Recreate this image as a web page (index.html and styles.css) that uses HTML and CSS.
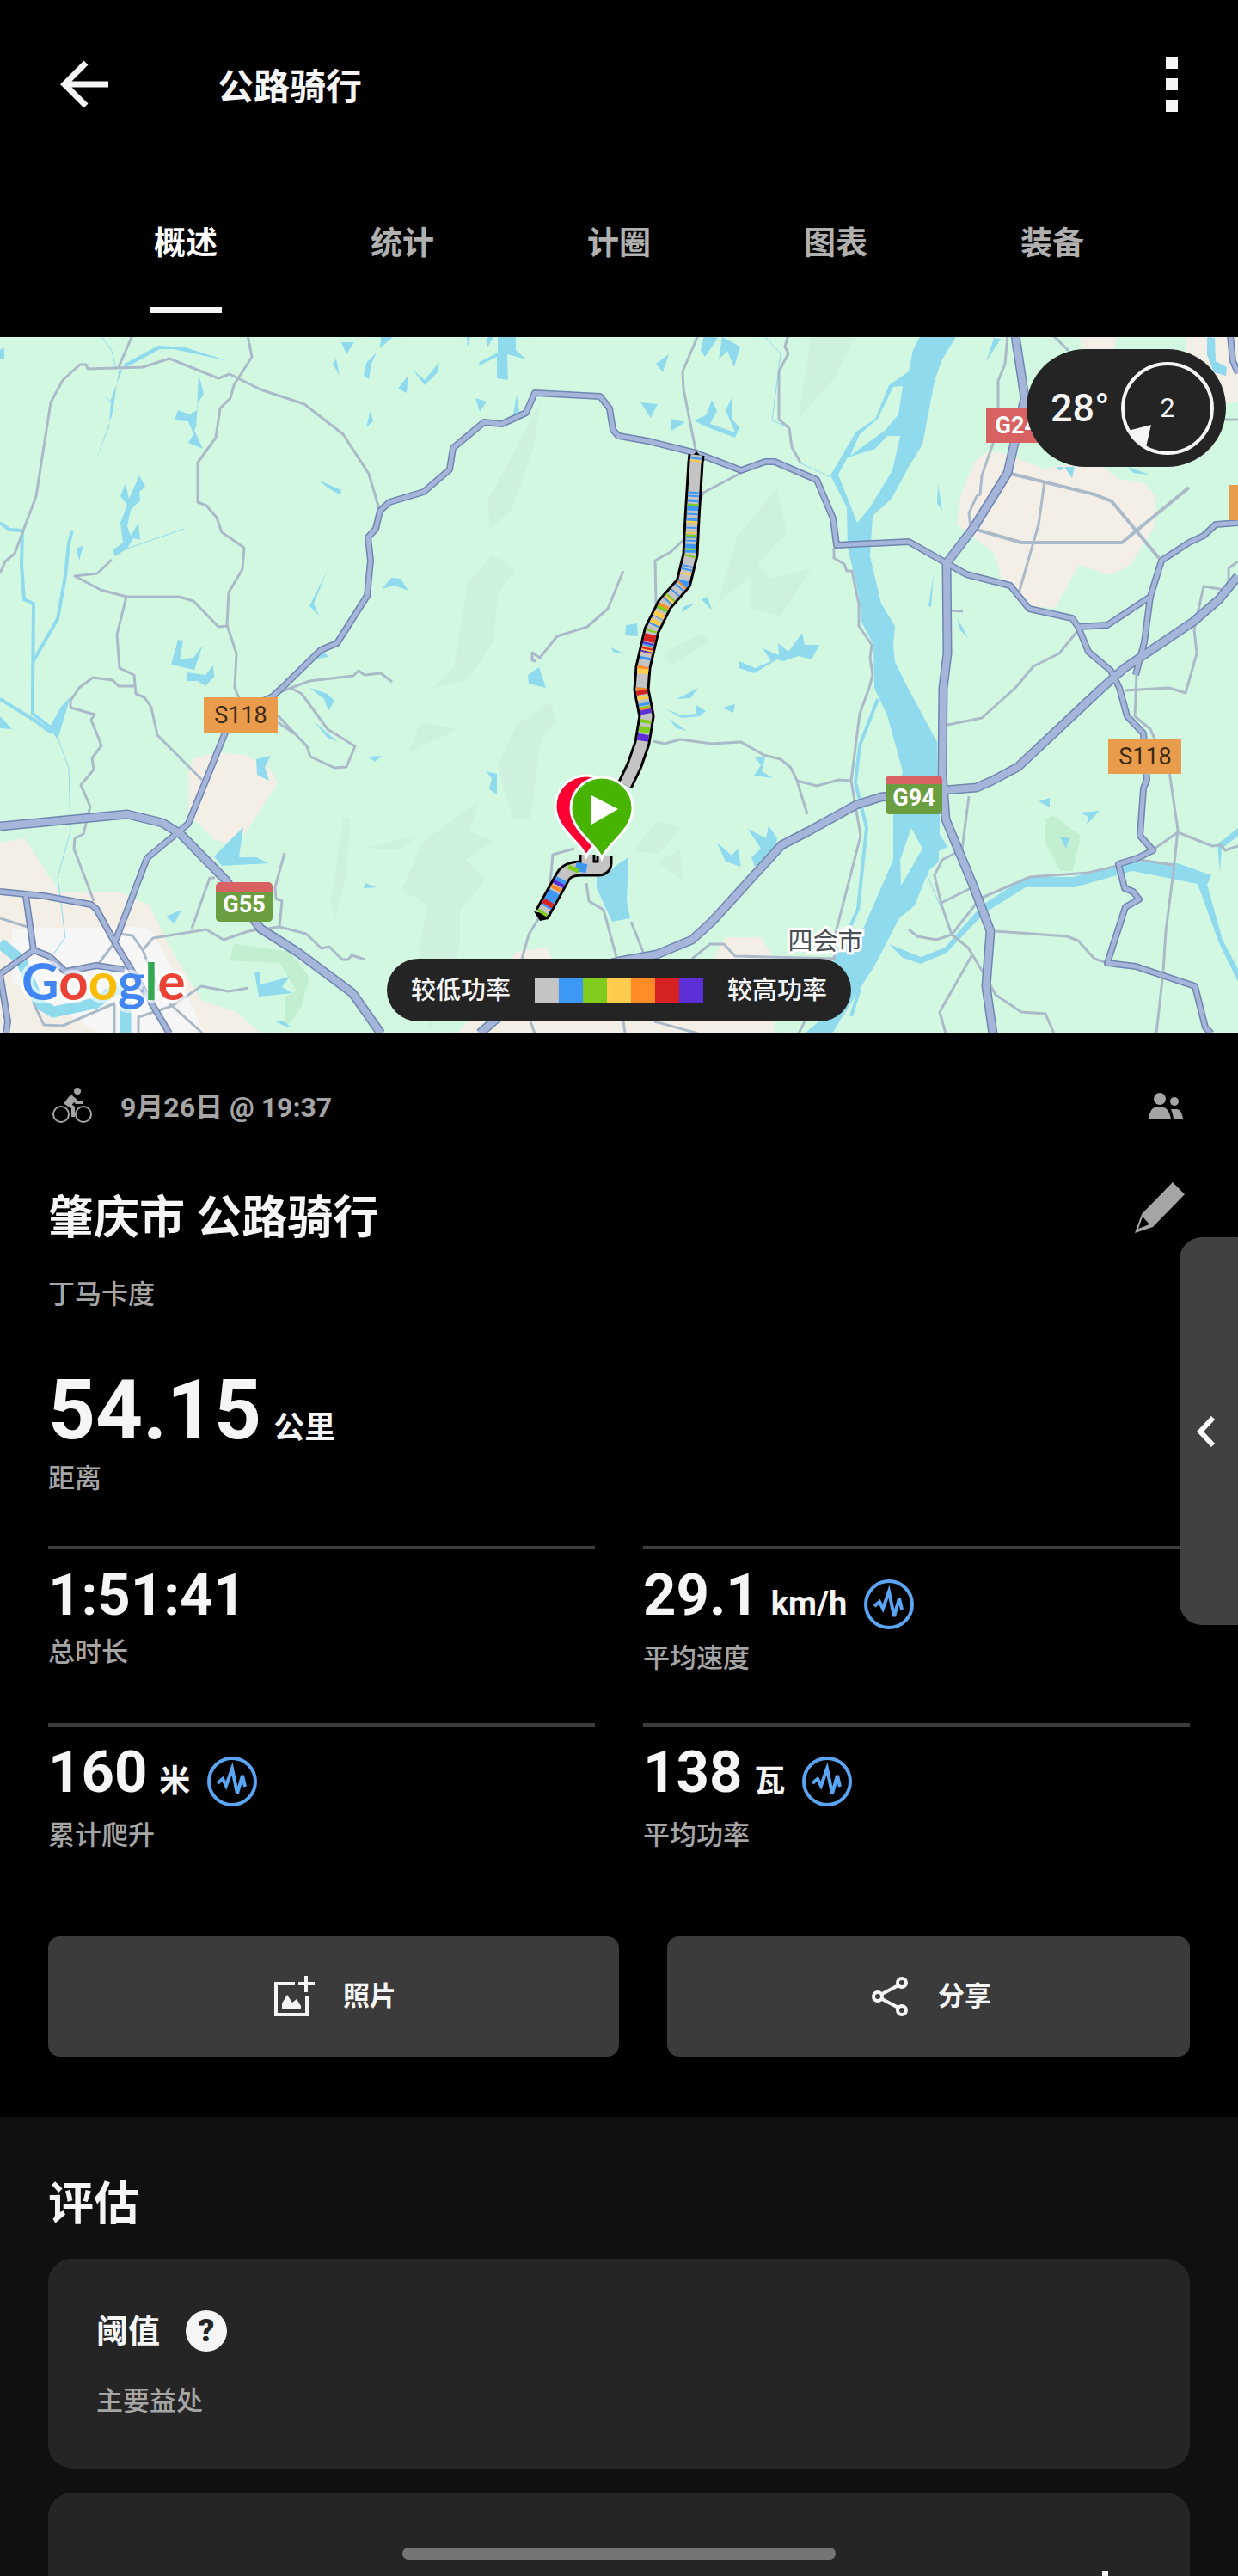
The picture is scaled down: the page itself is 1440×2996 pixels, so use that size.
FILE: index.html
```html
<!DOCTYPE html>
<html lang="zh-CN">
<head>
    <meta charset="UTF-8">
    <meta name="viewport" content="width=device-width, initial-scale=1.0">
    <title>公路骑行</title>
    <link rel="stylesheet" href="styles.css">
</head>
<body>
    <header class="app-bar">
        <button class="icon-button" aria-label="返回">
            <svg width="56" height="56" viewBox="0 0 56 56" fill="none" stroke="currentColor" stroke-width="7"><path d="M56 28H6M30 3L5 28l25 25"/></svg>
        </button>
        <h1 class="app-title">公路骑行</h1>
        <button class="icon-button" aria-label="更多">
            <svg width="14" height="64" viewBox="0 0 14 64" fill="currentColor"><path d="M0 0h14v14H0zM0 25h14v14H0zM0 50h14v14H0z"/></svg>
        </button>
    </header>

    <nav class="tabs">
        <button class="tab active">概述</button>
        <button class="tab">统计</button>
        <button class="tab">计圈</button>
        <button class="tab">图表</button>
        <button class="tab">装备</button>
    </nav>

    <section class="map">
        <svg class="map-canvas" viewBox="0 0 1440 810">
            <defs>
                <g id="highways">
                    <path d="M1181-2L1192 71 1172 158 1133 221 1101 263 1102 368 1097 408 1096 508 1100 561 1132 638 1152 691 1147 755 1155 810"/>
                    <path d="M1440 278L1418 305 1388 331 1308 385 1282 408 1184 500 1154 516 1136 524 1099 527 1025 535 996 544 940 575 909 591 828 680 805 701 764 718 720 726 640 745 574 796 558 810"/>
                    <path d="M0 569L148 555 189 565 210 578 262 631 303 688 347 716 410 763 443 810"/>
                </g>
                <g id="trunks">
                    <path d="M720 116L713 108 709 83 698 69 622 65 612 88 584 101 563 99 527 129 523 154 493 180 453 192 442 202 437 223 428 233 431 260 427 301 392 356 373 364 328 408 317 418 270 440 262 460 219 566 171 606 134 703"/>
                    <path d="M720 115L754 121 810 135 862 155 890 145 901 145 950 166 969 211 973 242 1057 238 1101 263 1124 276 1175 289 1197 316 1247 327 1254 337 1288 335 1338 302 1351 260 1383 239 1400 231 1414 218 1440 216"/>
                    <path d="M1338 302L1331 355 1321 393"/>
                    <path d="M1254 337L1266 366 1292 388 1302 408 1311 441 1330 461 1334 515 1330 525 1326 580 1341 597 1323 606 1301 613 1308 641 1318 645 1325 654 1309 663 1288 728 1321 732 1390 755 1402 803 1409 810"/>
                    <path d="M0 645L51 650 106 660 112 665 134 705 174 771 197 810"/>
                    <path d="M30 650L39 713 0 741 9 796 7 810"/>
                    <path d="M39 713L57 720 76 738 112 731 145 736"/>
                    <path d="M1431-2L1434 28 1440 42"/>
                </g>
                <path id="ride" d="M810 137L809 146 805 211 803 253 795 286 773 311 758 341 748 384 746 410 752 441 747 472 738 498 727 521"/>
                <path id="ride-end" d="M683 602V616M703 603V611Q703 618 696 618H677Q660 618 655 627L631 670"/>
            </defs>

            <rect class="land" width="1440" height="810"/>

            <g class="hill">
                <path d="M629 75L567 191 570 223 595 201 620 131zM573 253L599 271 579 300 574 355 544 398 505 408 528 383 544 286z"/>
                <path d="M943-2H995L970 48 929 95zM904 176L915 228 881 265 897 281 944 269 908 325 872 316 874 278 834 310 858 231z"/>
                <path d="M771 368L814 345 826 353 780 383zM736 598L764 563 793 570 766 601zM791 595L795 633 765 611z"/>
                <path d="M640 425L648 446 629 468 617 561H597L578 498 601 451zM558 538L546 575 574 586 542 608 565 630 535 668V708L500 805 487 708 498 661 467 643 491 588z"/>
                <path d="M489 448L533 456 475 483zM399 561H408L402 628 389 680 385 655zM425 594L489 579 463 597z"/>
            </g>
            <path class="park" d="M273 706L337 715 360 745 350 780 331 805V768L345 760 325 728 266 725zM1225 556L1257 580 1248 621H1233L1216 588V561z"/>

            <g class="suburb">
                <path d="M1149 133L1168 135 1214 153 1262 145 1278 148 1301 165 1331 170 1344 185V218L1315 265 1292 277 1255 265 1227 315 1200 313 1175 285 1165 281 1156 251 1113 218 1117 185 1133 145z"/>
                <path d="M1255-2H1299L1290 40 1260 20zM1380-2H1440V75L1410 80 1380 30z"/>
                <path d="M225 490L253 483 285 486 312 500 323 518 287 575 262 588 250 585 220 555 219 508z"/>
                <path d="M0 588L28 583 69 645H138L174 661 197 708 234 771 275 785 303 810H0z"/>
                <path d="M533 810L600 715 636 710 650 740 820 740 844 698H885L910 740 899 810z"/>
            </g>
            <path class="city" d="M14 688L151 686 174 688 197 728 220 771 238 810H115L60 775 14 750z"/>

            <g class="water">
                <path d="M1071-2L1062 15 1057 40 1034 56 1018 95 995 111 966 161 985 198 986 245 999 301 1002 331 1016 358 1017 408 1032 440 1050 505 1039 555V608L1005 686 972 718 963 741 977 775 936 810H968L1000 758 1018 730 1046 676 1064 661 1080 621 1092 610V598L1102 593 1093 578V555L1090 511V471L1056 408 1041 378 1039 358 1041 336 1025 310 1012 255 1015 208 1037 188 1057 151 1073 125 1087 51 1096 26 1113-2z"/>
                <path d="M709 621L720 612 731 605 729 655 733 676 712 680 694 641V626z"/>
                <path d="M1034 706L1071 721 1099 710 1142 661 1193 628 1248 628 1317 610 1370 612 1409 626 1404 637 1422 701 1440 735V750L1418 705 1393 636 1317 621 1250 640 1193 640 1145 670 1101 716 1071 729 1050 722z"/>
                <path d="M397 6H412L403 20zM391 25L395 45 387 31zM443 0H457L442 13zM438 18L432 31 429 49 423 45 426 30zM475 44L473 65 463 60zM480 38L494 50 511 29 509 41 494 56z"/>
                <path d="M579-2H600V15L612 26 590 20 591 50 578 48V23L556 34 558 29 579 18zM553 71L566 75 558 87zM601 67L604 88 597 90zM431 85L434 98 426 105zM543 0L547 0 544 12zM567 0H574L567 12z"/>
                <path d="M231 43L237 66 230 77 228 105 226 108 236 130 219 123 225 113 219 98 203 97 207 85 221 90 229 85z"/>
                <path d="M146 170L150 188 162 161 169 174 162 180 163 190 152 201 148 220 152 231 161 216 163 236 155 234 148 246 134 255 131 248 143 239 140 216 148 195 140 185z"/>
                <path d="M370 166L397 178 396 184 381 175zM381 271L365 310 371 324 360 313zM444 293L455 280 466 281 475 295 459 289zM97 242L92 260 89 246zM0 15L5 12V25H0z"/>
                <path d="M207 352L213 353 209 375 225 373 236 358 226 387 199 381zM218 390L239 393 248 382 249 395 239 406 230 400H218zM627 384L635 408 615 403 614 393zM373 364L383 372 368 374z"/>
                <path d="M145 31L184 10 215 12 266 28 202 14 186 14 138 40 133 75 130 92 109 150 127 104 129 75 119 66 128 75z"/>
                <path d="M819-2L835 1 820 23 815 15zM840 0L861 11 854 35 846 16 836 26zM778 20L771 41 763 31zM745 76L765 78 757 94zM781 95L797 99 781 109zM828 73L834 86 826 101 855 111 844 85 851 71V95L860 105 855 117 823 105 807 97 821 91z"/>
                <path d="M1156 1L1164 2 1147 29zM1404 0L1413 1 1414 28 1427 35 1426 45 1412 41 1404 21zM1229 151H1250L1247 164 1238 151 1233 156zM1312 151L1337 160 1318 158zM1091 171L1096 202 1090 193zM1086 274L1083 314 1080 313zM1113 326L1126 350 1117 341z"/>
                <path d="M860 377L878 385 897 377 887 362 906 370 905 356 917 366 933 344 936 358 953 358 944 375 929 371 911 377 904 375 877 391 860 385zM728 335L741 333 742 348 727 347zM792 321L796 313 808 310zM816 305L823 302 828 318zM711 361L728 369 713 366z"/>
                <path d="M812 408L787 421 803 420zM773 432L793 440 810 438V428L821 435 814 441 793 443zM840 431L855 427 853 437zM778 444L799 458 787 455zM878 489H890L886 505 899 513 877 510 885 498z"/>
                <path d="M870 572L891 583 894 568 904 583 901 595 878 616 874 605 885 595zM834 588L851 603 858 595 862 616 844 610zM1208 540L1221 536V547zM1256 553L1279 551 1264 567 1266 558zM1233 581L1244 583 1240 595zM1440 571L1416 590 1419 623 1421 595 1440 580z"/>
                <path d="M298 491L315 487 308 500 313 516 299 509zM283 570L278 605H298L313 612 258 615 249 604zM360 408L381 415 389 423 382 435 377 421zM365 447L393 471 381 466zM428 488L444 487 436 494zM565 505L578 508V532L569 526 572 513z"/>
                <path d="M425 635L438 640 423 641zM193 674L211 666 203 682zM296 738L303 739V753L337 744 328 756 340 763 301 767zM57 455L71 430 82 418 67 468zM319 795L330 796 340 804 328 800zM0 441L14 456 0 455z"/>
            </g>
            <path class="land" d="M1039 58L1050 57 1045 90 1030 108 989 138 1000 113 1021 95zM1032 115H1047L1038 155 1012 198 997 216 975 160 986 140 1018 130zM1060 571L1073 595 1048 638 1047 608z"/>

            <g class="stream">
                <path d="M0 216L11 224 26 225 25 265 28 305 39 310 38 408V438L64 458"/>
                <path d="M84 225L80 240 76 278 67 328 38 378M0 421L39 445 60 460M1021 421L1000 475 995 518 1008 571 998 665 975 718M1000 758L990 790"/>
                <path class="thin" d="M67 466L80 501 82 575 67 628 76 698 62 718M117-2L130 16 135 38M930 146L966 163M148 246L214 223M1078 625L1095 665M888-2L908 19 898 97 918 106"/>
                <path class="wide" d="M0 705L25 725 45 775 62 785 110 775 140 755M146 775V810"/>
            </g>

            <g class="road">
                <path d="M154-2L138 35M0 275L6 261 17 252 42 185 59 76 73 50 93 32H100L102 37 166 35 197 25 254 48 267 43 303 61 354 78 399 113 429 159 441 200"/>
                <path d="M288-2L293 23 272 56 268 71 256 83 251 117 230 146V192L240 196 252 210 258 227 284 245 282 270 266 297 264 335 275 368 273 408 278 420"/>
                <path d="M130 259L113 275 87 278 117 294 147 302H208L225 307 254 337 264 336M147 302L136 346 139 385 156 393 158 415 168 419 176 431 183 463 235 515"/>
                <path d="M156 406H138L131 399 108 396 92 408 82 423V431L110 439 106 445 118 475 107 490 109 503 94 521 105 546 97 578 87 583 86 595 109 656"/>
                <path d="M328 412L360 400 411 394 417 388 424 393 443 391 456 401M725 272L707 316 683 337 648 348 628 373 619 367V376L624 377"/>
                <path d="M338 408L351 415 381 456 413 476 403 500 389 501 361 488 357 476 323 440M323 448L345 463"/>
                <path d="M812-2L794 40 795 60 809 131M917-2L913 11 917 19 906 40V96L918 106 921 128 931 146M862 158L818 181 796 235 780 250 762 260 763 310"/>
                <path d="M1172-2L1169 31 1161 51V85L1156 121 1142 161 1140 183 1136 185 1127 205 1129 221M1225-2L1243 16M1215 168L1208 218 1185 298"/>
                <path class="major" d="M1172 158L1273 183 1293 191 1348 257M1136 224L1188 239H1305L1383 175"/>
                <path d="M970 245V257L982 264 985 272H991L999 311V336L1014 358 1012 373 1015 393 1011 408 1000 438 990 516 1001 580 972 693 970 723M1103 318L1120 319"/>
                <path d="M1254 341L1232 368 1202 383 1181 408 1142 443 1102 451M1440 261L1429 269V286M1425 294L1400 290 1389 340 1392 368 1379 414 1360 408 1308 411"/>
                <path d="M1322 393L1320 441 1338 456 1360 505 1370 573 1365 621 1356 691 1353 738 1345 810M1343 595L1370 576 1410 592 1420 591 1425 597 1440 592M1425 96H1440"/>
                <path d="M759 470L773 473 791 468 828 473 862 471 888 486 908 491 920 501 927 516 939 555M927 516L950 522 976 515 990 516"/>
                <path d="M1127 534L1119 596 1096 608 1087 626 1095 660 1107 695 1126 710 1147 745 1158 765 1188 785 1216 787 1226 810M1129 641L1095 658M1365 614L1326 608"/>
                <path d="M1299 615L1266 623 1198 628 1140 653 1107 695 1089 701 1067 697 1057 689M1158 691L1241 697 1254 702 1273 723 1288 728M1130 720L1093 785 1100 810"/>
                <path d="M972 723L855 720 842 706H826L805 723M761 796L812 810M617 796L622 810M936 796L929 810M725 796L727 810"/>
                <path d="M668 595L643 602 640 635M682 635L685 656 702 666 717 721M627 675L615 695 607 723M734 680L748 715"/>
                <path d="M0 676L32 686M331 600L320 640 321 653 328 656 325 686M250 629H244L223 688M166 713L178 699 240 689 260 701 289 691 325 686 356 694 374 711 383 709 398 724H405L409 719 425 724"/>
                <path d="M289 757L266 761 234 755 200 778 161 791V810M166 713L154 696 138 694M39 775L51 800 73 801 133 775V810M197 775L236 810M166 713L185 760M110 735L134 703"/>
            </g>

            <use href="#trunks" class="trunk-casing"/>
            <use href="#highways" class="highway-casing"/>
            <use href="#trunks" class="trunk"/>
            <use href="#highways" class="highway"/>

            <g class="shield">
                <rect class="provincial" x="237" y="419" width="86" height="41"/>
                <text class="dark" x="280" y="449">S118</text>
                <rect class="provincial" x="1289" y="467" width="85" height="41"/>
                <text class="dark" x="1332" y="497">S118</text>
                <rect class="provincial" x="1429" y="172" width="86" height="41"/>
                <rect class="national" x="1147" y="82" width="86" height="41"/>
                <text x="1190" y="112">G240</text>
                <rect class="national" x="251" y="634" width="66" height="40" rx="5"/>
                <path class="express" d="M251 645H317V675Q317 680 312 680H256Q251 680 251 675z"/>
                <text x="284" y="669">G55</text>
                <rect class="national" x="1030" y="510" width="66" height="40" rx="5"/>
                <path class="express" d="M1030 520H1096V550Q1096 555 1091 555H1035Q1030 555 1030 550z"/>
                <text x="1063" y="545">G94</text>
            </g>
            <text class="place" x="960" y="713">四会市</text>

            <path d="M800 144L810 133 820 144z"/>
            <use href="#ride" class="ride-casing"/>
            <use href="#ride-end" class="ride-casing"/>
            <path d="M621 668L628 679 638 677 641 672z"/>
            <use href="#ride" class="ride-zone z1"/>
            <use href="#ride-end" class="ride-zone z1"/>
            <!-- power zones, offsets run from the north end of the ride -->
            <use href="#ride" class="ride-zone z2" stroke-dasharray="0 3 2 38 2 2 2 3 3 3 7 3 2 4 7 3 2 4 2 2 3 2 2 3 5 2 3 15 2 2 2 12 6 3 2 6 2 8 5 5 2 3 2 7 3 5 5 22 3 13 3 10 3 20 4 14 3 400"/>
            <use href="#ride" class="ride-zone z3" stroke-dasharray="0 57 2 34 2 14 2 6 2 53 2 12 5 26 2 44 3 29 2 10 2 14 4 4 7 400"/>
            <use href="#ride" class="ride-zone z4" stroke-dasharray="0 6 2 69 3 10 2 46 2 34 3 7 3 7 6 4 5 29 7 16 8 26 4 12 3 400"/>
            <use href="#ride" class="ride-zone z5" stroke-dasharray="0 152 2 30 3 39 3 8 3 20 3 22 3 21 3 400"/>
            <use href="#ride" class="ride-zone z6" stroke-dasharray="0 222 9 7 2 48 5 400"/>
            <use href="#ride" class="ride-zone z7" stroke-dasharray="0 232 2 8 2 67 5 24 8 400"/>
            <path class="ride-zone z2" d="M653 630L651 634M645 645L635 663M677 612L675 622"/>
            <path class="ride-zone z3" d="M668 616L666 621M632 668L630 671"/>
            <path class="ride-zone z7" d="M651 634L649 638"/>
            <path class="ride-zone z5" d="M648 639L646 643"/>
            <path class="ride-zone z6" d="M639 656L636 661"/>

            <path class="pin end" d="M682 604C676 588 646 572 646 546A36 36 0 0 1 718 546C718 572 688 588 682 604z"/>
            <path class="pin start" d="M700 606C694 590 664 574 664 548A36 36 0 0 1 736 548C736 574 706 590 700 606z"/>
            <path d="M688 533V567L719 549z" fill="#fff"/>

            <text class="google" x="25" y="771"><tspan fill="#4285f4">G</tspan><tspan fill="#ea4335">o</tspan><tspan fill="#fbbc05">o</tspan><tspan fill="#4285f4">g</tspan><tspan fill="#34a853">l</tspan><tspan fill="#ea4335">e</tspan></text>
        </svg>

        <div class="weather">
            <span class="temperature">28°</span>
            <span class="wind">
                <svg width="108" height="108" viewBox="0 0 108 108"><circle cx="54" cy="54" r="52" fill="none" stroke="#f5f5f5" stroke-width="4"/><path d="M8 80L35 73 29 99Q16 93 8 80z" fill="#f5f5f5"/></svg>
                <span class="wind-speed">2</span>
            </span>
        </div>

        <div class="legend">
            <span>较低功率</span>
            <span class="swatches"><i class="z1"></i><i class="z2"></i><i class="z3"></i><i class="z4"></i><i class="z5"></i><i class="z6"></i><i class="z7"></i></span>
            <span>较高功率</span>
        </div>
    </section>

    <main class="activity">
        <div class="meta">
            <svg width="48" height="44" viewBox="0 0 48 44" fill="none" stroke="currentColor" stroke-width="2"><circle cx="11" cy="32" r="9"/><circle cx="37" cy="32" r="9"/><circle cx="30" cy="5" r="4" fill="currentColor" stroke="none"/><path d="M23 11L17 19 25 24V35" stroke-width="4"/><path d="M22 11L29 18H37" stroke-width="4"/><path d="M23 10L29 14 23 22 16 19z" fill="currentColor" stroke="none"/></svg>
            <time class="date">9月26日 @ 19:37</time>
            <svg class="people" width="40" height="30" viewBox="0 0 40 30" fill="currentColor"><circle cx="13" cy="7" r="7"/><circle cx="30" cy="10" r="5"/><path d="M0 30Q2 17 8 17H17Q23 17 26 30zM26 19H33Q38 19 40 30H29Q28 23 26 19z"/></svg>
        </div>

        <div class="title-row">
            <h2 class="activity-title">肇庆市 公路骑行</h2>
            <button class="edit-button" aria-label="编辑">
                <svg width="60" height="60" viewBox="0 0 60 60" fill="currentColor"><path d="M45 1L59 15 22 53 1 60 9 38zM10 41L5 55 18 50z" fill-rule="evenodd"/></svg>
            </button>
        </div>
        <p class="device">丁马卡度</p>

        <p class="distance">54.15<span class="unit">公里</span></p>
        <p class="label">距离</p>

        <div class="stats">
            <div class="stat">
                <p class="value">1:51:41</p>
                <p class="label">总时长</p>
            </div>
            <div class="stat rated">
                <p class="value">29.1<span class="unit latin">km/h</span><svg class="pulse" width="58" height="58" viewBox="0 0 58 58"><circle cx="29" cy="29" r="27"/><path d="M12 31L18 26 22 34 29 14 35 43 41 22 44 35"/></svg></p>
                <p class="label">平均速度</p>
            </div>
            <div class="stat rated">
                <p class="value">160<span class="unit">米</span><svg class="pulse" width="58" height="58" viewBox="0 0 58 58"><circle cx="29" cy="29" r="27"/><path d="M12 31L18 26 22 34 29 14 35 43 41 22 44 35"/></svg></p>
                <p class="label">累计爬升</p>
            </div>
            <div class="stat rated">
                <p class="value">138<span class="unit">瓦</span><svg class="pulse" width="58" height="58" viewBox="0 0 58 58"><circle cx="29" cy="29" r="27"/><path d="M12 31L18 26 22 34 29 14 35 43 41 22 44 35"/></svg></p>
                <p class="label">平均功率</p>
            </div>
        </div>

        <div class="actions">
            <button class="action">
                <svg width="48" height="48" viewBox="0 0 48 48" fill="none" stroke="currentColor" stroke-width="4"><path d="M24 9H2V45H38V24M37 0V19M28 9H47"/><path d="M9 38V32L15 22 21 31 26 27 31 35V38z" fill="currentColor" stroke="none"/></svg>
                <span>照片</span>
            </button>
            <button class="action">
                <svg width="48" height="48" viewBox="0 0 48 48" fill="none" stroke="currentColor" stroke-width="4"><circle cx="10" cy="24" r="5"/><circle cx="38" cy="8" r="5"/><circle cx="38" cy="40" r="5"/><path d="M15 21L34 11M15 27L34 37"/></svg>
                <span>分享</span>
            </button>
        </div>
    </main>

    <section class="assessment">
        <h2 class="section-title">评估</h2>
        <article class="card">
            <div class="card-head">
                <h3 class="card-title">阈值</h3>
                <button class="help" aria-label="帮助">?</button>
            </div>
            <p class="label">主要益处</p>
        </article>
        <article class="card next-card">
            <svg width="7" height="6" viewBox="0 0 7 6" fill="#f5f5f5"><path d="M0 0h7v6H0z"/></svg>
        </article>
    </section>

    <button class="drawer" aria-label="展开">
        <svg width="22" height="36" viewBox="0 0 22 36" fill="none" stroke="currentColor" stroke-width="6"><path d="M19 2L4 18 19 34"/></svg>
    </button>
    <div class="home-indicator"></div>
</body>
</html>
```
FILE: styles.css
```css
:root {
    --text: #f5f5f5;
    --muted: #a5a5a5;
    --line: #3d3d3d;
    --panel: #252525;
    --accent: #5ba5f5;
}

* {
    margin: 0;
    padding: 0;
    box-sizing: border-box;
}

body {
    position: relative;
    min-height: 100vh;
    display: flex;
    flex-direction: column;
    background: #000;
    color: var(--text);
    font-family: Roboto, "Noto Sans CJK SC", sans-serif;
    font-size: 31px;
    line-height: 40px;
}

button {
    background: none;
    border: none;
    color: inherit;
    font: inherit;
    cursor: pointer;
}

svg {
    display: block;
    flex-shrink: 0;
}

/* Header */
.app-bar {
    display: flex;
    align-items: center;
    height: 196px;
    padding: 0 70px;
}

.app-title {
    flex: 1;
    margin-left: 127px;
    padding-top: 8px;
    font-size: 42px;
    font-weight: 700;
    line-height: 56px;
}

.tabs {
    display: grid;
    grid-template-columns: repeat(5, 1fr);
    height: 196px;
    padding: 0 90px 28px;
}

.tab {
    position: relative;
    padding-top: 8px;
    color: #b0b0b0;
    font-size: 37px;
    font-weight: 700;
}

.tab.active {
    color: #fff;
}

.tab.active::after {
    content: "";
    position: absolute;
    left: 50%;
    bottom: 0;
    width: 84px;
    height: 7px;
    margin-left: -42px;
    background: var(--text);
}

/* Map */
.map {
    position: relative;
    overflow: hidden;
}

.map-canvas {
    width: 100%;
    height: auto;
}

.land { fill: #d3f8e2; }
.hill { fill: #cdf1dd; }
.park { fill: #c2efd0; }
.suburb { fill: #f4efe6; }
.city { fill: #f6f6f6; }
.water { fill: #90daee; }

.stream,
.road,
.trunk,
.trunk-casing,
.highway,
.highway-casing {
    fill: none;
    stroke-linejoin: round;
}

.stream { stroke: #90daee; stroke-width: 4; }
.stream .thin { stroke-width: 1; }
.stream .wide { stroke-width: 13; }
.road { stroke: #abbac9; stroke-width: 3; }
.road .major { stroke-width: 4; }
.trunk-casing { stroke: #6f86b0; stroke-width: 8; }
.trunk { stroke: #a6b6da; stroke-width: 5; }
.highway-casing { stroke: #6f86b0; stroke-width: 11; }
.highway { stroke: #a6b6da; stroke-width: 8; }

.shield text {
    fill: #fff;
    font-size: 27px;
    font-weight: 700;
    text-anchor: middle;
}

.shield .dark {
    fill: #3b2a14;
    font-weight: 400;
}

.provincial { fill: #e99c4c; }
.national { fill: #d86161; }
.express { fill: #6b9e41; }

.place {
    fill: #4a4f55;
    stroke: #fff;
    stroke-width: 6;
    paint-order: stroke;
    font-size: 29px;
    text-anchor: middle;
}

.ride-casing {
    fill: none;
    stroke: #000;
    stroke-width: 19;
    stroke-linejoin: round;
}

.ride-zone {
    fill: none;
    stroke-width: 13;
}

.z1 { stroke: #c4c4c4; background: #c4c4c4; }
.z2 { stroke: #3d97f5; background: #3d97f5; }
.z3 { stroke: #7fcc1c; background: #7fcc1c; }
.z4 { stroke: #ffcc4d; background: #ffcc4d; }
.z5 { stroke: #ff8c26; background: #ff8c26; }
.z6 { stroke: #d62222; background: #d62222; }
.z7 { stroke: #5c30d6; background: #5c30d6; }

.pin { stroke: #fff; stroke-width: 3; }
.pin.start { fill: #46b400; }
.pin.end { fill: #ff0033; }

.google {
    font-family: Lato, sans-serif;
    font-size: 60px;
    font-weight: 700;
    stroke: rgba(255, 255, 255, 0.6);
    stroke-width: 8;
    stroke-linejoin: round;
    paint-order: stroke;
}

.weather {
    position: absolute;
    top: 14px;
    right: 14px;
    display: flex;
    align-items: center;
    justify-content: space-between;
    width: 232px;
    height: 137px;
    padding: 0 14px 0 28px;
    border-radius: 69px;
    background: #242424;
}

.temperature {
    font-size: 45px;
    font-weight: 500;
}

.wind {
    display: grid;
    place-items: center;
}

.wind > * {
    grid-area: 1 / 1;
}

.wind-speed {
    font-size: 31px;
}

.legend {
    position: absolute;
    left: 50%;
    bottom: 14px;
    transform: translateX(-50%);
    display: flex;
    align-items: center;
    gap: 28px;
    height: 73px;
    padding: 0 28px;
    border-radius: 37px;
    background: #242424;
    font-size: 29px;
    font-weight: 500;
    white-space: nowrap;
}

.swatches {
    display: flex;
}

.swatches i {
    width: 28px;
    height: 28px;
}

/* Activity */
.activity {
    padding: 54px 56px 70px;
}

.meta {
    display: flex;
    align-items: center;
    height: 60px;
    padding: 0 8px 0 4px;
    color: var(--muted);
}

.date {
    flex: 1;
    margin-left: 32px;
    padding-top: 4px;
    font-size: 32px;
    font-weight: 700;
}

.title-row {
    display: flex;
    justify-content: space-between;
    margin-top: 58px;
    padding-right: 5px;
}

.activity-title {
    padding-top: 3px;
    font-size: 53px;
    font-weight: 700;
    line-height: 80px;
}

.edit-button {
    height: 60px;
    color: var(--muted);
}

.device {
    margin-top: 29px;
    color: var(--muted);
    font-weight: 500;
}

.distance {
    display: flex;
    align-items: baseline;
    margin-top: 54px;
    font-size: 96px;
    font-weight: 700;
    line-height: 120px;
}

.unit {
    margin-left: 14px;
    font-size: 36px;
    line-height: 40px;
}

.label {
    color: var(--muted);
    font-weight: 500;
}

.stats {
    display: grid;
    grid-template-columns: 1fr 1fr;
    grid-auto-rows: 206px;
    column-gap: 56px;
    margin-top: 58px;
}

.stat {
    padding-top: 13px;
    border-top: 4px solid var(--line);
}

.value {
    display: flex;
    align-items: baseline;
    height: 80px;
    font-size: 67px;
    font-weight: 700;
    line-height: 80px;
}

.value .latin {
    font-size: 38px;
}

.stat .label {
    margin-top: 7px;
}

.stat.rated .label {
    margin-top: 14px;
}

.pulse {
    align-self: flex-end;
    margin-left: 20px;
    fill: none;
    stroke: var(--accent);
    stroke-width: 4;
}

.actions {
    display: grid;
    grid-template-columns: 664fr 608fr;
    gap: 56px;
    margin-top: 42px;
}

.action {
    display: flex;
    align-items: center;
    justify-content: center;
    gap: 32px;
    height: 140px;
    padding-left: 4px;
    border-radius: 14px;
    background: #3b3b3b;
    font-weight: 700;
}

/* Assessment */
.assessment {
    flex: 1;
    display: flex;
    flex-direction: column;
    padding: 72px 56px 0;
    background: #101010;
}

.section-title {
    margin-bottom: 33px;
    font-size: 53px;
    font-weight: 700;
    line-height: 60px;
}

.card {
    padding: 58px 56px;
    border-radius: 28px;
    background: var(--panel);
}

.card-head {
    display: flex;
    align-items: center;
    gap: 30px;
    height: 52px;
    margin-bottom: 36px;
}

.card-title {
    padding-top: 4px;
    font-size: 37px;
    font-weight: 700;
}

.help {
    width: 48px;
    height: 48px;
    border-radius: 50%;
    background: var(--text);
    color: var(--panel);
    font-size: 37px;
    font-weight: 900;
    line-height: 48px;
}

.next-card {
    flex: 1;
    display: flex;
    align-items: flex-end;
    justify-content: flex-end;
    min-height: 97px;
    margin-top: 28px;
    padding: 0 95px 0 0;
    border-radius: 28px 28px 0 0;
}

/* Overlays */
.drawer {
    position: absolute;
    top: 1439px;
    right: 0;
    display: flex;
    align-items: center;
    justify-content: center;
    width: 68px;
    height: 451px;
    padding-right: 6px;
    border-radius: 26px 0 0 26px;
    background: #414141;
    color: #fff;
}

.home-indicator {
    position: fixed;
    left: 50%;
    bottom: 19px;
    width: 35%;
    height: 14px;
    border-radius: 7px;
    background: #757575;
    transform: translateX(-50%);
}
```
